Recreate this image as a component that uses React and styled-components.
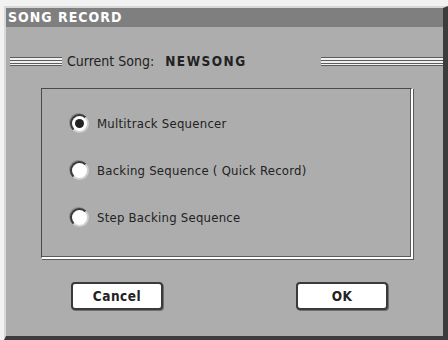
import React from "react";
import styled, { createGlobalStyle } from "styled-components";

const Global = createGlobalStyle`
  html, body { margin: 0; padding: 0; background: #ffffff; }
  body {
    width: 448px; height: 340px; overflow: hidden;
    font-family: "DejaVu Sans Condensed", "DejaVu Sans", "Liberation Sans", sans-serif;
    font-stretch: condensed;
  }
`;

const Frame = styled.div`
  box-sizing: border-box;
  width: 448px;
  height: 340px;
  padding-top: 6px;
  padding-left: 4px;
  background: #f2f2f2;
`;

const Window = styled.div`
  box-sizing: border-box;
  width: 444px;
  height: 334px;
  background: #adadad;
  border-top: 2px solid #d8d8d8;
  border-left: 2px solid #d8d8d8;
  border-right: 5px solid #3c3c3c;
  border-bottom: 4px solid #3c3c3c;
  display: flex;
  flex-direction: column;
`;

const TitleBar = styled.div`
  height: 19px;
  background: #7f7f7f;
  color: #ffffff;
  font-weight: bold;
  font-size: 14px;
  letter-spacing: 1px;
  line-height: 19px;
  padding-left: 2px;
`;

const SongRow = styled.div`
  display: flex;
  align-items: center;
  margin-top: 27px;
  height: 14px;
  padding-left: 4px;
  gap: 5px;
`;

const Rule = styled.div`
  width: ${p => p.$w}px;
  box-sizing: border-box;
  height: 9px;
  background: repeating-linear-gradient(
    to bottom,
    #5c5c5c 0px, #5c5c5c 1px,
    #f0f0f0 1px, #f0f0f0 3px
  );
  border-bottom: 1px solid #5c5c5c;
`;

const SongLabel = styled.span`
  font-size: 14px;
  color: #222;
`;

const SongName = styled.span`
  font-weight: bold;
  font-size: 13.5px;
  letter-spacing: 1.5px;
  color: #222;
  margin-left: 6px;
`;

const Spacer = styled.div`
  flex: 1;
`;

const Panel = styled.div`
  box-sizing: border-box;
  margin: 20px 0 0 35px;
  width: 372px;
  height: 171px;
  border-top: 1px solid #4a4a4a;
  border-left: 1px solid #4a4a4a;
  border-right: 2px solid #ffffff;
  border-bottom: 2px solid #ffffff;
  box-shadow: inset -1px -1px 0 #5a5a5a, 1px 1px 0 #5a5a5a;
  padding: 25px 0 0 28px;
  display: flex;
  flex-direction: column;
  gap: 28px;
`;

const Option = styled.div`
  display: flex;
  align-items: center;
  gap: 8px;
  height: 19px;
  font-size: 13px;
  letter-spacing: 0.25px;
  color: #222;
`;

const Radio = styled.span`
  box-sizing: border-box;
  width: 19px;
  height: 19px;
  border-radius: 50%;
  background: #ffffff;
  border: 2px solid #3a3a3a;
  border-right-color: #d0d0d0;
  border-bottom-color: #d0d0d0;
  box-shadow: -1px -1px 0 #8a8a8a;
  display: flex;
  align-items: center;
  justify-content: center;
  &::after {
    content: "";
    width: 9px;
    height: 9px;
    border-radius: 50%;
    background: ${p => (p.$on ? "#222" : "transparent")};
  }
`;

const Buttons = styled.div`
  display: flex;
  justify-content: space-between;
  padding: 23px 55px 0 65px;
`;

const Button = styled.div`
  box-sizing: border-box;
  width: 92px;
  height: 28px;
  background: #ffffff;
  border: 2px solid #3a3a3a;
  border-radius: 4px;
  box-shadow: 1px 1px 0 #707070;
  display: flex;
  align-items: center;
  justify-content: center;
  font-weight: bold;
  font-size: 13.5px;
  letter-spacing: 0.5px;
  color: #222;
`;

export default function App() {
  return (
    <>
      <Global />
      <Frame>
        <Window>
          <TitleBar>SONG RECORD</TitleBar>
          <SongRow>
            <Rule $w={52} />
            <SongLabel>Current Song:</SongLabel>
            <SongName>NEWSONG</SongName>
            <Spacer />
            <Rule $w={122} />
          </SongRow>
          <Panel>
            <Option><Radio $on />Multitrack Sequencer</Option>
            <Option><Radio />Backing Sequence ( Quick Record)</Option>
            <Option><Radio />Step Backing Sequence</Option>
          </Panel>
          <Buttons>
            <Button>Cancel</Button>
            <Button>OK</Button>
          </Buttons>
        </Window>
      </Frame>
    </>
  );
}
